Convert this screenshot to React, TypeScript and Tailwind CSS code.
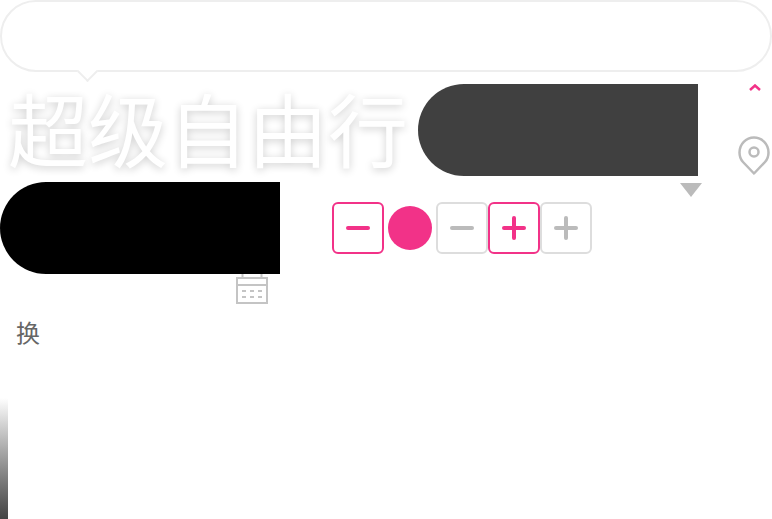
const pink = '#f23288'

function Stepper({ plus, active }: { plus?: boolean; active?: boolean }) {
  return (
    <div
      className={
        active
          ? 'flex h-[52px] w-[52px] items-center justify-center rounded-md border-2 border-[#f23288]'
          : 'flex h-[52px] w-[52px] items-center justify-center rounded-md border-2 border-[#dddddd]'
      }
    >
      <svg width="24" height="24" viewBox="0 0 24 24" fill="none" stroke={active ? pink : '#bbbbbb'} strokeWidth="4" strokeLinecap="round">
        <path d="M2 12h20" />
        {plus && <path d="M12 2v20" />}
      </svg>
    </div>
  )
}

export default function App() {
  return (
    <div className="h-[519px] w-[772px] overflow-hidden bg-white font-['Noto_Sans_CJK_SC',sans-serif]">
      {/* Bubble */}
      <div className="relative h-[72px] rounded-[36px] border-2 border-[#eeeeee] bg-white">
        <div className="absolute left-[78px] top-[62px] h-[15px] w-[15px] rotate-45 border-b-2 border-r-2 border-[#eeeeee] bg-white" />
      </div>

      {/* Title row */}
      <div className="mt-3 flex h-[92px]">
        <div className="ml-2 h-[92px] w-[400px] text-[80px] leading-[84px] text-white [text-shadow:0_2px_8px_rgba(0,0,0,0.2)]">
          超级自由行
        </div>
        <div className="ml-[10px] h-[92px] w-[280px] rounded-l-[46px] bg-[#404040]" />
        <div className="ml-[40px] flex w-[32px] flex-col items-center">
          <svg className="ml-[2px]" width="12" height="7" viewBox="0 0 12 7" fill="none" stroke={pink} strokeWidth="2.500">
            <path d="M1 6 6 1.500 11 6" />
          </svg>
          <svg className="mt-[45px]" width="32" height="39" viewBox="0 0 32 39" fill="none" stroke="#bbbbbb" strokeWidth="2.500">
            <path d="M16 37.500 5 26C2.500 23.300 1.500 20 1.500 16.500 1.500 8 8 1.500 16 1.500S30.500 8 30.500 16.500C30.500 20 29.500 23.300 27 26Z" strokeLinejoin="round" />
            <circle cx="16" cy="16" r="4.500" />
          </svg>
        </div>
      </div>

      {/* Controls row */}
      <div className="mt-[6px] flex h-[92px]">
        <div className="h-[92px] w-[280px] rounded-l-[46px] bg-black" />
        <div className="ml-[52px] mt-5 flex h-[52px]">
          <Stepper active />
          <div className="mx-1 mt-1 h-11 w-11 rounded-full bg-[#f23288]" />
          <Stepper />
          <Stepper plus active />
          <Stepper plus />
        </div>
        <svg className="ml-[88px] mt-[1px]" width="22" height="14" viewBox="0 0 22 14" fill="#bbbbbb">
          <path d="M0 0h22L11 14Z" />
        </svg>
      </div>

      {/* Calendar */}
      <div className="flex justify-end pr-[504px]">
        <svg width="32" height="30" viewBox="0 0 32 30" fill="none" stroke="#c4c4c4" strokeWidth="2">
          <path d="M1 4h30v25H1ZM1 11h30M6.500 0v4M25.500 0v4" />
          <path d="M6 17h4M14 17h4M22 17h4M6 23h4M14 23h4M22 23h4" />
        </svg>
      </div>

      <div className="ml-4 mt-3 text-2xl leading-[32px] text-[#666666]">换</div>

      {/* Gradient strip */}
      <div className="mt-[50px] h-[121px] w-2 bg-gradient-to-b from-white to-[#444444]" />
    </div>
  )
}
